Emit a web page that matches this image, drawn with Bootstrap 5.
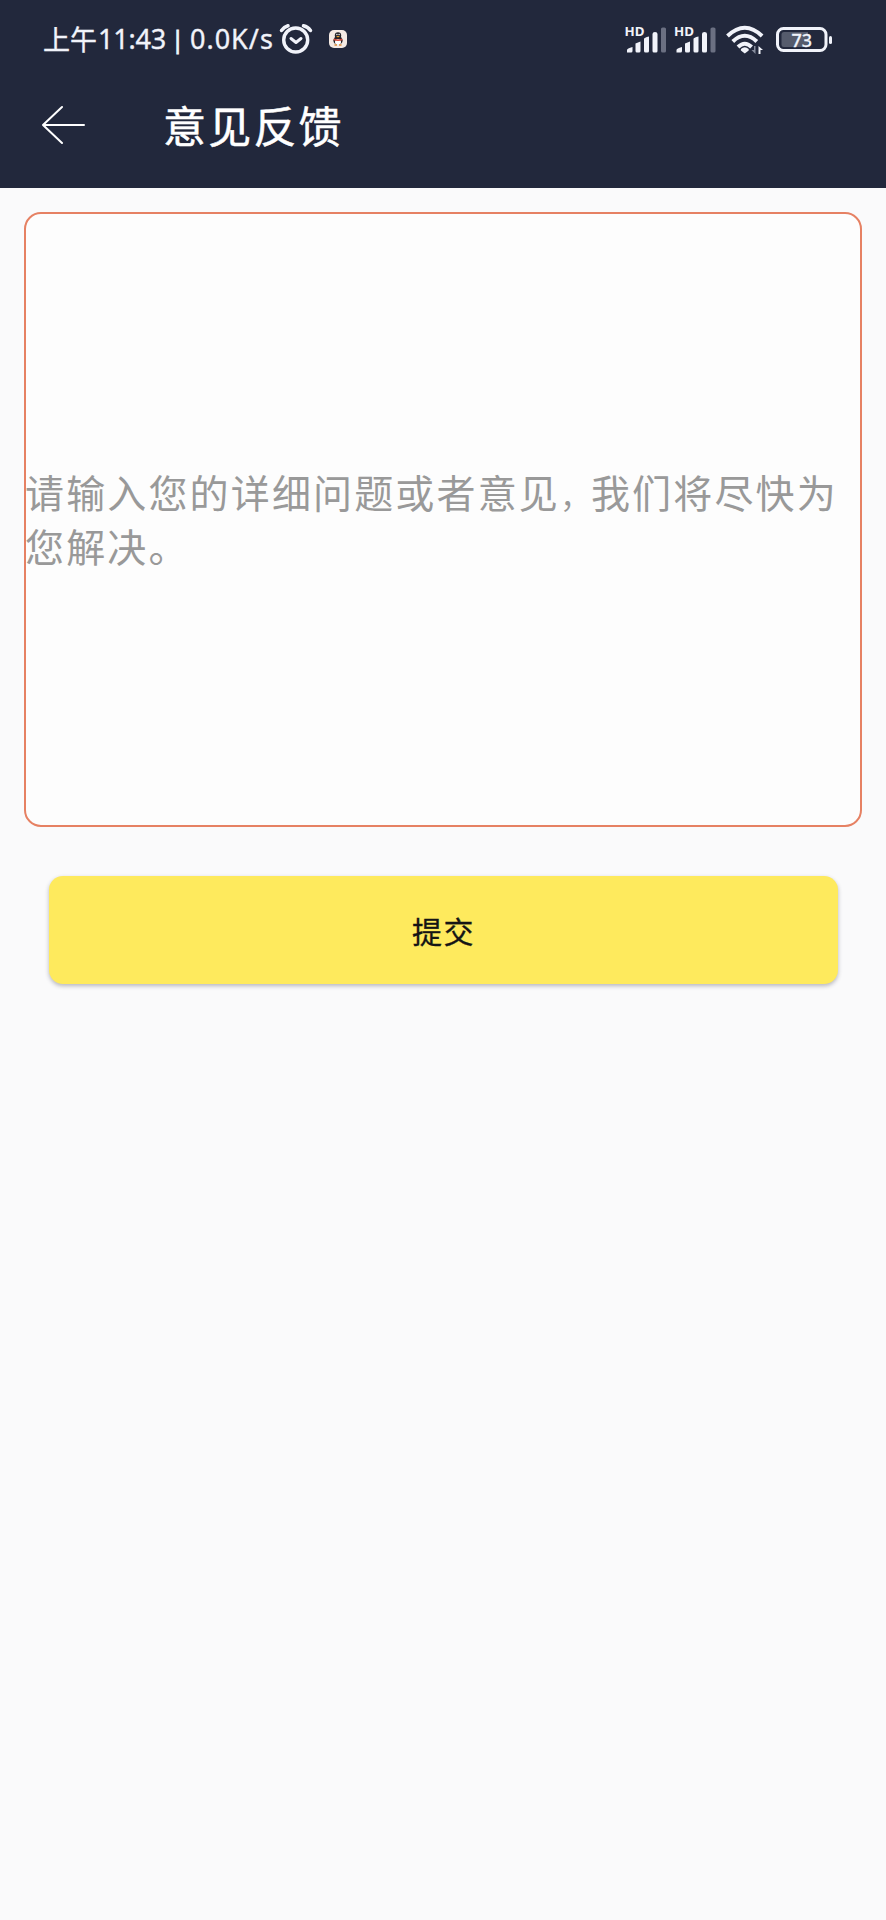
<!DOCTYPE html>
<html lang="zh-CN">
<head>
<meta charset="utf-8">
<meta name="viewport" content="width=device-width, initial-scale=1">
<title>意见反馈</title>
<link rel="stylesheet" href="https://cdn.jsdelivr.net/npm/bootstrap@5.3.0/dist/css/bootstrap.min.css">
<style>
body{background:#fafafb;font-family:"Noto Sans","Noto Sans CJK SC",sans-serif;min-height:1920px;overflow-x:hidden}
.top-area{background:#22283c;height:188px;color:#fff}
.status-bar{height:76px;padding:2px 40px 0 43px;color:#f1f3fa;font-size:27px;line-height:40px;white-space:pre;-webkit-text-stroke:.35px #f1f3fa}
.cjk{font-family:"Noto Sans CJK SC",sans-serif}
.clock-text{width:55px}
.clock-num{width:73px;letter-spacing:-.2px}
.clock-bar{width:19px;font-size:24px;-webkit-text-stroke-width:.8px}
.speed{width:89px;letter-spacing:1px}
.title-bar{height:98px;padding-left:42px}
.page-title{font:400 43px/60px "Noto Sans CJK SC",sans-serif;letter-spacing:2.2px;margin:-3px 0 0 77px;-webkit-text-stroke:.5px #fff}
.feedback-box{height:615px;margin:24px 24px 0;border:2px solid #e68163;border-radius:17px;background:#fdfdfd;color:#999;font:400 39px/54px "Noto Sans CJK SC",sans-serif;letter-spacing:2.15px;white-space:nowrap;padding-bottom:3px}
.hint{margin-left:-1px}
.comma{font-size:31px;letter-spacing:0;line-height:1}
.submit-btn{height:108px;margin:49px 48px 0 49px;background:#feea5d!important;border:0;border-radius:14px;color:#151515;font:400 30px/40px "Noto Sans CJK SC",sans-serif;letter-spacing:1.5px;-webkit-text-stroke:.3px #151515;box-shadow:0 2px 4px rgba(40,40,60,.32)}
svg{display:block;flex:none;-webkit-text-stroke:0}
svg text{font-family:"Noto Sans",sans-serif}
</style>
</head>
<body>
<header class="top-area">
  <div class="status-bar d-flex align-items-center">
    <span class="cjk clock-text">上午</span><span class="clock-num">11:43</span><span class="clock-bar">|</span><span class="speed">0.0K/s</span>
    <svg width="36" height="34" viewBox="279 21 36 34" fill="none" stroke="#f1f3fa" stroke-linecap="round" stroke-linejoin="round"><circle cx="295.7" cy="39" r="12" stroke-width="3.4"/><path d="M281.500 29.500Q284 26 288 24.800M303.500 24.800Q308 26 310.500 29.500" stroke-width="3.500"/><path d="m291 37.500 5 4 5-4" stroke-width="3"/></svg>
    <svg style="margin-left:13px" width="20" height="20" viewBox="0 0 20 20"><rect x="1" y="1" width="18" height="18" rx="5" fill="#f5eae4"/><ellipse cx="10" cy="11.500" rx="4.600" ry="4.300" fill="#252429"/><circle cx="10" cy="6.500" r="3.200" fill="#252429"/><ellipse cx="10" cy="13" rx="3" ry="3" fill="#fff"/><path d="M6 9.500q4 2 8 0l.5 1.800q-4.500 1.500-9 0z" fill="#d64837"/><path d="M8 7h4l-2 1.500z" fill="#eda02e"/><path d="M6.500 16h2.500M11 16h2.500" stroke="#dc8b37" stroke-width="1.500"/><circle cx="8.900" cy="5.500" r=".7" fill="#fff"/><circle cx="11.100" cy="5.500" r=".7" fill="#fff"/></svg>
    <svg class="ms-auto" width="226" height="40" viewBox="620 18 226 40">
      <defs><g id="signal"><text x="-.5" y="17" font-size="12.500" font-weight="700" fill="#f1f3fa" textLength="20" lengthAdjust="spacingAndGlyphs">HD</text><path d="M2 33.500V31q0-1.500 5.500-3V32q0 1.500-1.500 1.500zM10.500 24.500l5-2V32q0 1.500-1.500 1.500h-2q-1.500 0-1.500-1.500zM19 20q0-1.500 5-2.500V32q0 1.500-1.500 1.500h-2Q19 33.500 19 32zM27.500 15q0-2 2.500-2t2.500 2V32q0 1.500-1.500 1.500h-2q-1.500 0-1.500-1.500z" fill="#f1f3fa"/><rect x="36" y="8.500" width="5" height="25" rx="1.600" fill="#6b7082"/></g></defs>
      <use href="#signal" x="625" y="18"/><use href="#signal" x="674.500" y="18"/>
      <g fill="none" stroke="#f1f3fa" stroke-width="4"><path d="M727.500 35Q744.800 18.500 762.100 35"/><path d="M732.800 40.500Q744.800 29 756.800 40.500"/><path d="M738 46Q744.800 39.500 751.600 46"/></g>
      <path d="M740.900 48q3.900-3.500 7.800 0v1.500l-3.900 3-3.900-3z" fill="#f1f3fa"/>
      <path d="M755.500 45v8l-4-4h2.500v-4z" fill="#858b9c"/><path d="M758.500 53v-8l4.500 4h-2.500v4z" fill="#f1f3fa"/>
      <rect x="777.500" y="27.500" width="48.500" height="22" rx="6" fill="none" stroke="#f1f3fa" stroke-width="3"/>
      <path d="M784 31h24v15h-24q-2.500 0-2.500-2.500v-10Q781.500 31 784 31z" fill="#555b6c"/><rect x="829" y="35" width="3" height="8" rx="1.500" fill="#f1f3fa"/>
      <text x="791.500" y="45.500" font-size="18" font-weight="500" fill="#f1f3fa" stroke="#f1f3fa" stroke-width=".3" textLength="20.500" lengthAdjust="spacingAndGlyphs">73</text>
    </svg>
  </div>
  <div class="title-bar d-flex align-items-center">
    <svg width="44" height="40" viewBox="42 105 44 40" fill="none" stroke="#fff" stroke-width="2" stroke-linecap="round" stroke-linejoin="round" role="img" aria-label="返回"><path d="M62 107 43 125l19 18M43 125h41"/></svg>
    <h1 class="page-title">意见反馈</h1>
  </div>
</header>
<main>
  <div class="feedback-box d-flex align-items-center"><div class="hint">请输入您的详细问题或者意见<span class="comma">，</span>我们将尽快为<br>您解决。</div></div>
  <div class="d-flex"><button type="button" class="btn submit-btn flex-grow-1">提交</button></div>
</main>
<script src="https://cdn.jsdelivr.net/npm/bootstrap@5.3.0/dist/js/bootstrap.bundle.min.js"></script>
</body>
</html>
